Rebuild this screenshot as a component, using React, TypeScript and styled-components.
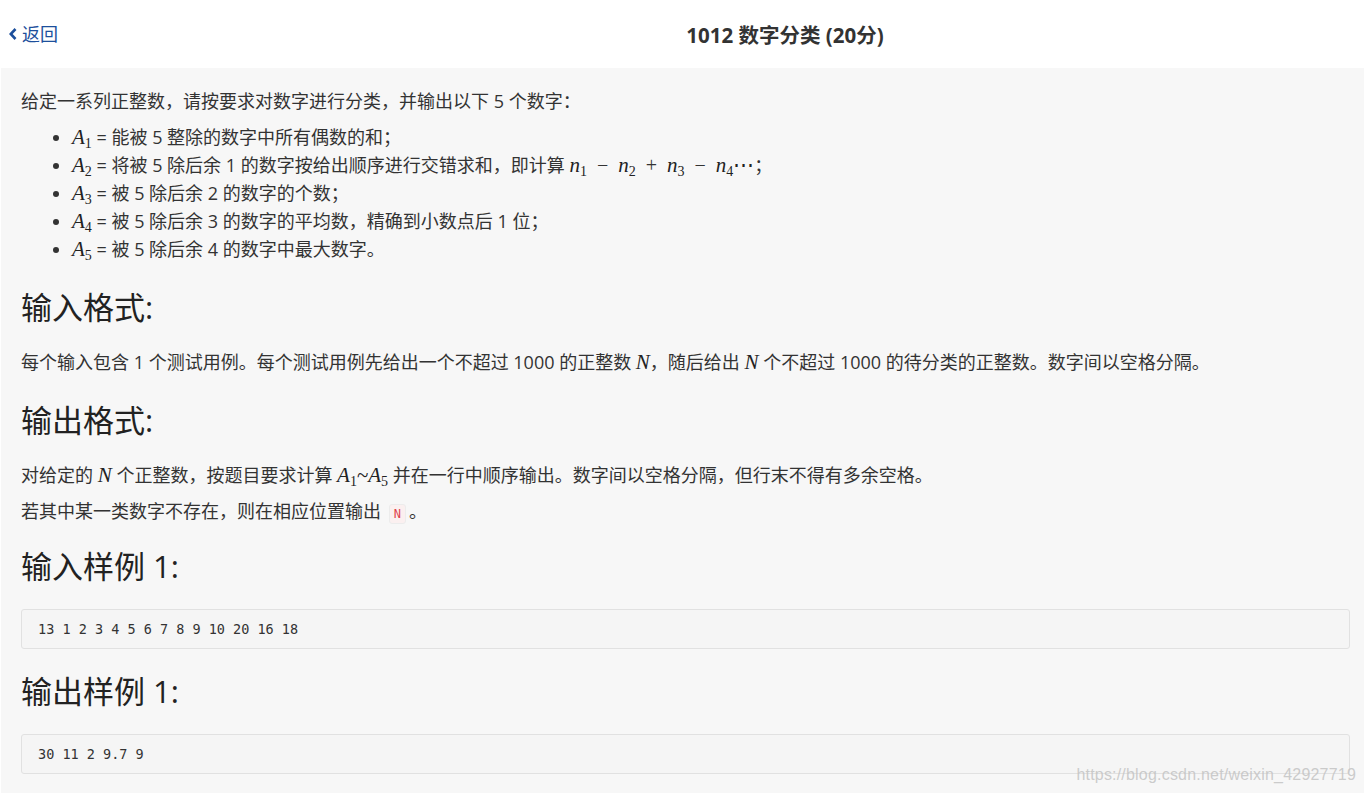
import React from 'react';
import styled, { createGlobalStyle } from 'styled-components';

const GlobalStyle = createGlobalStyle`
  html, body {
    margin: 0;
    padding: 0;
    background: #fff;
  }
  body {
    font-family: "Open Sans", "Noto Sans CJK SC", sans-serif;
    color: #333;
  }
`;

const Page = styled.div`
  position: relative;
  width: 1364px;
  height: 793px;
  overflow: hidden;
`;

const Header = styled.div`
  height: 68px;
  display: flex;
  align-items: center;
  justify-content: center;
  padding-left: 206px;
  position: relative;
  background: #fff;
`;

const BackLink = styled.a`
  position: absolute;
  left: 8px;
  top: 22px;
  display: flex;
  align-items: center;
  gap: 4px;
  color: #1c4f9c;
  font-size: 18px;
  line-height: 24px;
  text-decoration: none;
  cursor: pointer;
`;

const Title = styled.h1`
  margin: 0;
  font-size: 20.5px;
  font-weight: 700;
  color: #333;
`;

const Body = styled.div`
  margin-left: 1px;
  background: #f7f7f7;
  padding: 19px 14px 40px 20px;
  height: 100%;
`;

const Para = styled.p`
  margin: 0 0 8px;
  font-size: 18px;
  line-height: 28px;
  color: #333;
`;

const List = styled.ul`
  margin: 0;
  padding-left: 51px;
  font-size: 18px;
  line-height: 28px;

  li {
    height: 28px;
  }
`;

const Heading = styled.h2<{ $top?: number }>`
  margin: ${p => p.$top ?? 24}px 0 21px;
  font-size: 31px;
  line-height: 40px;
  font-weight: 400;
  color: #222;
`;

const Pre = styled.pre`
  margin: 23px 0 0;
  padding: 0 16px;
  height: 38px;
  line-height: 38px;
  border: 1px solid #e1e1e1;
  border-radius: 3px;
  background: #f5f5f5;
  font-family: "DejaVu Sans Mono", monospace;
  font-size: 13.5px;
  color: #333;
`;

const M = styled.span<{ $upright?: boolean }>`
  font-family: "Liberation Serif", "DejaVu Serif", serif;
  font-style: ${p => (p.$upright ? 'normal' : 'italic')};
  font-size: 21px;
  line-height: 1;
  color: #222;
`;

const Sub = styled.sub`
  font-style: normal;
  font-size: 14px;
  vertical-align: -4px;
  line-height: 0;
`;

const Op = styled.span`
  font-family: "Liberation Serif", serif;
  font-style: normal;
  font-size: 20px;
  line-height: 1;
  margin: 0 10px;
`;

const Code = styled.code`
  display: inline-block;
  padding: 0 4px;
  margin: 0 3px;
  line-height: 18px;
  font-family: "DejaVu Sans Mono", monospace;
  font-size: 12px;
  color: #e0434b;
  background: #fbf0f0;
  border: 1px solid #ececec;
  border-radius: 3px;
`;

const Watermark = styled.div`
  position: absolute;
  right: 8px;
  bottom: 8px;
  font-family: "Liberation Sans", sans-serif;
  font-size: 16px;
  line-height: 20px;
  color: rgba(195, 195, 195, 0.85);
  letter-spacing: 0.2px;
`;

const A = ({ n }: { n: number }) => (
  <M>
    A<Sub>{n}</Sub>
  </M>
);

const Nn = ({ n }: { n: number }) => (
  <M>
    n<Sub>{n}</Sub>
  </M>
);

const ChevronLeft = () => (
  <svg width="10" height="14" viewBox="0 0 10 14">
    <path d="M7.5 2 L2.8 7 L7.5 12" fill="none" stroke="#1c4f9c" strokeWidth="2.6" />
  </svg>
);

export default function App() {
  return (
    <>
      <GlobalStyle />
      <Page>
        <Header>
          <BackLink>
            <ChevronLeft />
            返回
          </BackLink>
          <Title>1012 数字分类 (20分)</Title>
        </Header>
        <Body>
          <Para>给定一系列正整数，请按要求对数字进行分类，并输出以下 5 个数字：</Para>
          <List>
            <li>
              <A n={1} /> = 能被 5 整除的数字中所有偶数的和；
            </li>
            <li>
              <A n={2} /> = 将被 5 除后余 1 的数字按给出顺序进行交错求和，即计算 <Nn n={1} />
              <Op>−</Op>
              <Nn n={2} />
              <Op>+</Op>
              <Nn n={3} />
              <Op>−</Op>
              <Nn n={4} />
              <M $upright>⋯</M>；
            </li>
            <li>
              <A n={3} /> = 被 5 除后余 2 的数字的个数；
            </li>
            <li>
              <A n={4} /> = 被 5 除后余 3 的数字的平均数，精确到小数点后 1 位；
            </li>
            <li>
              <A n={5} /> = 被 5 除后余 4 的数字中最大数字。
            </li>
          </List>

          <Heading $top={24}>输入格式:</Heading>
          <Para>
            每个输入包含 1 个测试用例。每个测试用例先给出一个不超过 1000 的正整数 <M>N</M>，随后给出 <M>N</M> 个不超过 1000
            的待分类的正整数。数字间以空格分隔。
          </Para>

          <Heading>输出格式:</Heading>
          <Para>
            对给定的 <M>N</M> 个正整数，按题目要求计算 <A n={1} />
            <M $upright>~</M>
            <A n={5} /> 并在一行中顺序输出。数字间以空格分隔，但行末不得有多余空格。
          </Para>
          <Para>
            若其中某一类数字不存在，则在相应位置输出 <Code>N</Code>。
          </Para>

          <Heading $top={21}>输入样例 1:</Heading>
          <Pre>13 1 2 3 4 5 6 7 8 9 10 20 16 18</Pre>

          <Heading $top={22}>输出样例 1:</Heading>
          <Pre>30 11 2 9.7 9</Pre>
        </Body>
        <Watermark>https://blog.csdn.net/weixin_42927719</Watermark>
      </Page>
    </>
  );
}
